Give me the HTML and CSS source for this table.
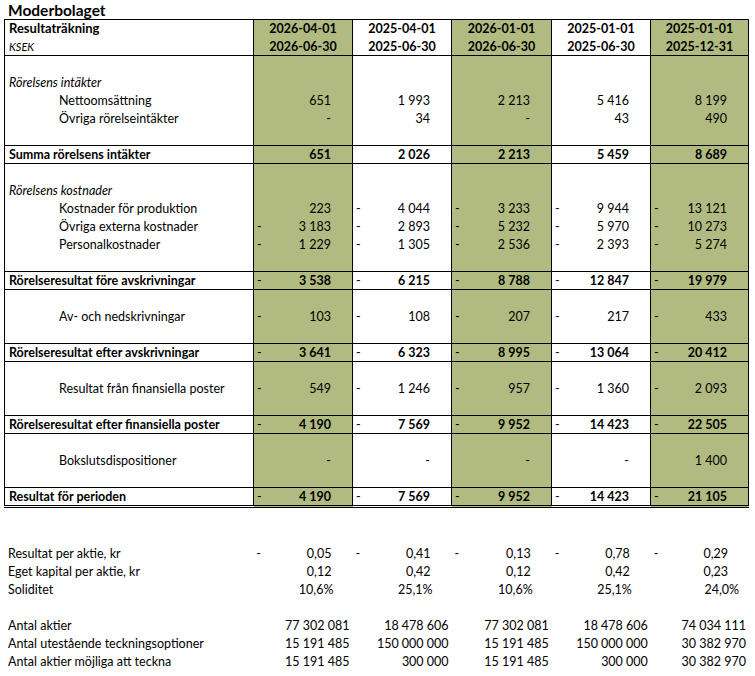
FILE: index.html
```html
<!DOCTYPE html>
<html lang="sv">
<head>
<meta charset="utf-8">
<title>Moderbolaget – Resultaträkning</title>
<link rel="stylesheet" href="styles.css">
</head>
<body>
<div class="page">
  <div class="company">Moderbolaget</div>
  <table class="report">
    <colgroup>
      <col class="c-label"><col class="c-num"><col class="c-num"><col class="c-num3"><col class="c-num"><col class="c-num5">
    </colgroup>
    <tbody class="blk head">
      <tr><td class="title">Resultaträkning</td><td class="date">2026-04-01</td><td class="date">2025-04-01</td><td class="date">2026-01-01</td><td class="date">2025-01-01</td><td class="date">2025-01-01</td></tr>
      <tr><td class="unit">KSEK</td><td class="date">2026-06-30</td><td class="date">2025-06-30</td><td class="date">2026-06-30</td><td class="date">2025-06-30</td><td class="date">2025-12-31</td></tr>
    </tbody>
    <tbody class="blk">
      <tr><td></td><td></td><td></td><td></td><td></td><td></td></tr>
      <tr><td class="sec">Rörelsens intäkter</td><td></td><td></td><td></td><td></td><td></td></tr>
      <tr><td class="item">Nettoomsättning</td><td>651</td><td>1 993</td><td>2 213</td><td>5 416</td><td>8 199</td></tr>
      <tr><td class="item">Övriga rörelseintäkter</td><td>-</td><td>34</td><td>-</td><td>43</td><td>490</td></tr>
      <tr><td></td><td></td><td></td><td></td><td></td><td></td></tr>
    </tbody>
    <tbody class="blk sum">
      <tr><td>Summa rörelsens intäkter</td><td>651</td><td>2 026</td><td>2 213</td><td>5 459</td><td>8 689</td></tr>
    </tbody>
    <tbody class="blk">
      <tr><td></td><td></td><td></td><td></td><td></td><td></td></tr>
      <tr><td class="sec">Rörelsens kostnader</td><td></td><td></td><td></td><td></td><td></td></tr>
      <tr><td class="item">Kostnader för produktion</td><td>223</td><td><span class="neg">-</span>4 044</td><td><span class="neg">-</span>3 233</td><td><span class="neg">-</span>9 944</td><td><span class="neg">-</span>13 121</td></tr>
      <tr><td class="item">Övriga externa kostnader</td><td><span class="neg">-</span>3 183</td><td><span class="neg">-</span>2 893</td><td><span class="neg">-</span>5 232</td><td><span class="neg">-</span>5 970</td><td><span class="neg">-</span>10 273</td></tr>
      <tr><td class="item">Personalkostnader</td><td><span class="neg">-</span>1 229</td><td><span class="neg">-</span>1 305</td><td><span class="neg">-</span>2 536</td><td><span class="neg">-</span>2 393</td><td><span class="neg">-</span>5 274</td></tr>
      <tr><td></td><td></td><td></td><td></td><td></td><td></td></tr>
    </tbody>
    <tbody class="blk sum">
      <tr><td>Rörelseresultat före avskrivningar</td><td><span class="neg">-</span>3 538</td><td><span class="neg">-</span>6 215</td><td><span class="neg">-</span>8 788</td><td><span class="neg">-</span>12 847</td><td><span class="neg">-</span>19 979</td></tr>
    </tbody>
    <tbody class="blk">
      <tr><td></td><td></td><td></td><td></td><td></td><td></td></tr>
      <tr><td class="item">Av- och nedskrivningar</td><td><span class="neg">-</span>103</td><td><span class="neg">-</span>108</td><td><span class="neg">-</span>207</td><td><span class="neg">-</span>217</td><td><span class="neg">-</span>433</td></tr>
      <tr><td></td><td></td><td></td><td></td><td></td><td></td></tr>
    </tbody>
    <tbody class="blk sum">
      <tr><td>Rörelseresultat efter avskrivningar</td><td><span class="neg">-</span>3 641</td><td><span class="neg">-</span>6 323</td><td><span class="neg">-</span>8 995</td><td><span class="neg">-</span>13 064</td><td><span class="neg">-</span>20 412</td></tr>
    </tbody>
    <tbody class="blk">
      <tr><td></td><td></td><td></td><td></td><td></td><td></td></tr>
      <tr><td class="item">Resultat från finansiella poster</td><td><span class="neg">-</span>549</td><td><span class="neg">-</span>1 246</td><td><span class="neg">-</span>957</td><td><span class="neg">-</span>1 360</td><td><span class="neg">-</span>2 093</td></tr>
      <tr><td></td><td></td><td></td><td></td><td></td><td></td></tr>
    </tbody>
    <tbody class="blk sum">
      <tr><td>Rörelseresultat efter finansiella poster</td><td><span class="neg">-</span>4 190</td><td><span class="neg">-</span>7 569</td><td><span class="neg">-</span>9 952</td><td><span class="neg">-</span>14 423</td><td><span class="neg">-</span>22 505</td></tr>
    </tbody>
    <tbody class="blk">
      <tr><td></td><td></td><td></td><td></td><td></td><td></td></tr>
      <tr><td class="item">Bokslutsdispositioner</td><td>-</td><td>-</td><td>-</td><td>-</td><td>1 400</td></tr>
      <tr><td></td><td></td><td></td><td></td><td></td><td></td></tr>
    </tbody>
    <tbody class="blk sum final">
      <tr><td>Resultat för perioden</td><td><span class="neg">-</span>4 190</td><td><span class="neg">-</span>7 569</td><td><span class="neg">-</span>9 952</td><td><span class="neg">-</span>14 423</td><td><span class="neg">-</span>21 105</td></tr>
    </tbody>
  </table>

  <table class="stats">
    <colgroup>
      <col class="c-label"><col class="c-num"><col class="c-num"><col class="c-num3"><col class="c-num"><col class="c-num5">
    </colgroup>
    <tbody>
      <tr><td></td><td></td><td></td><td></td><td></td><td></td></tr>
      <tr><td></td><td></td><td></td><td></td><td></td><td></td></tr>
      <tr><td>Resultat per aktie, kr</td><td><span class="neg">-</span>0,05</td><td><span class="neg">-</span>0,41</td><td><span class="neg">-</span>0,13</td><td><span class="neg">-</span>0,78</td><td><span class="neg">-</span>0,29</td></tr>
      <tr><td>Eget kapital per aktie, kr</td><td>0,12</td><td>0,42</td><td>0,12</td><td>0,42</td><td>0,23</td></tr>
      <tr class="pct"><td>Soliditet</td><td>10,6%</td><td>25,1%</td><td>10,6%</td><td>25,1%</td><td class="pct5">24,0%</td></tr>
      <tr><td></td><td></td><td></td><td></td><td></td><td></td></tr>
      <tr class="cnt"><td>Antal aktier</td><td>77 302 081</td><td>18 478 606</td><td>77 302 081</td><td>18 478 606</td><td>74 034 111</td></tr>
      <tr class="cnt"><td>Antal utestående teckningsoptioner</td><td>15 191 485</td><td>150 000 000</td><td>15 191 485</td><td>150 000 000</td><td>30 382 970</td></tr>
      <tr class="cnt"><td>Antal aktier möjliga att teckna</td><td>15 191 485</td><td>300 000</td><td>15 191 485</td><td>300 000</td><td>30 382 970</td></tr>
    </tbody>
  </table>
</div>
</body>
</html>
```

FILE: styles.css
```css
html, body {
  margin: 0;
  padding: 0;
  background: #ffffff;
}

body {
  font-family: Lato, "Open Sans", sans-serif;
  font-size: 12.5px;
  color: #000000;
}

.page {
  padding: 0 0 0 4px;
}

.company {
  font-weight: 700;
  font-size: 15.5px;
  height: 19px;
  line-height: 20px;
  padding-left: 4px;
}

table {
  border-collapse: collapse;
  table-layout: fixed;
  width: 745px;
}

.c-label { width: 249px; }
.c-num { width: 99px; }
.c-num3 { width: 100px; }
.c-num5 { width: 98px; }

td {
  height: 17px;
  padding: 0 21px 1px 3px;
  line-height: 15px;
  text-align: right;
  white-space: nowrap;
  vertical-align: bottom;
}

td:first-child {
  text-align: left;
  padding-left: 4px;
  padding-right: 0;
}

.report td {
  border-left: 1px solid #000;
  border-right: 1px solid #000;
}

.report td:nth-child(2),
.report td:nth-child(4),
.report td:nth-child(6) {
  background: #b1bb81;
}

.report tbody.blk tr:first-child td {
  border-top: 1px solid #000;
  height: 16px;
}

.report tbody.final td {
  border-bottom: 3px double #000;
  height: 15px;
}

.report .head td {
  font-weight: 700;
}

.report .head td.date {
  text-align: center;
  padding-left: 0;
  padding-right: 0;
}

.report td.title {
  font-size: 13px;
}

.report td.unit {
  font-style: italic;
  font-weight: 400;
  font-size: 11px;
}

.report .sec {
  font-style: italic;
}

.report .item {
  padding-left: 54px;
}

.report .sum td {
  font-weight: 700;
}

.neg {
  float: left;
  font-weight: 400;
}

.stats .pct td {
  padding-right: 19px;
}

.stats .pct td.pct5 {
  padding-right: 10px;
}

.stats .cnt td {
  padding-right: 3px;
}

.stats td:first-child {
  padding-right: 0;
}
```
